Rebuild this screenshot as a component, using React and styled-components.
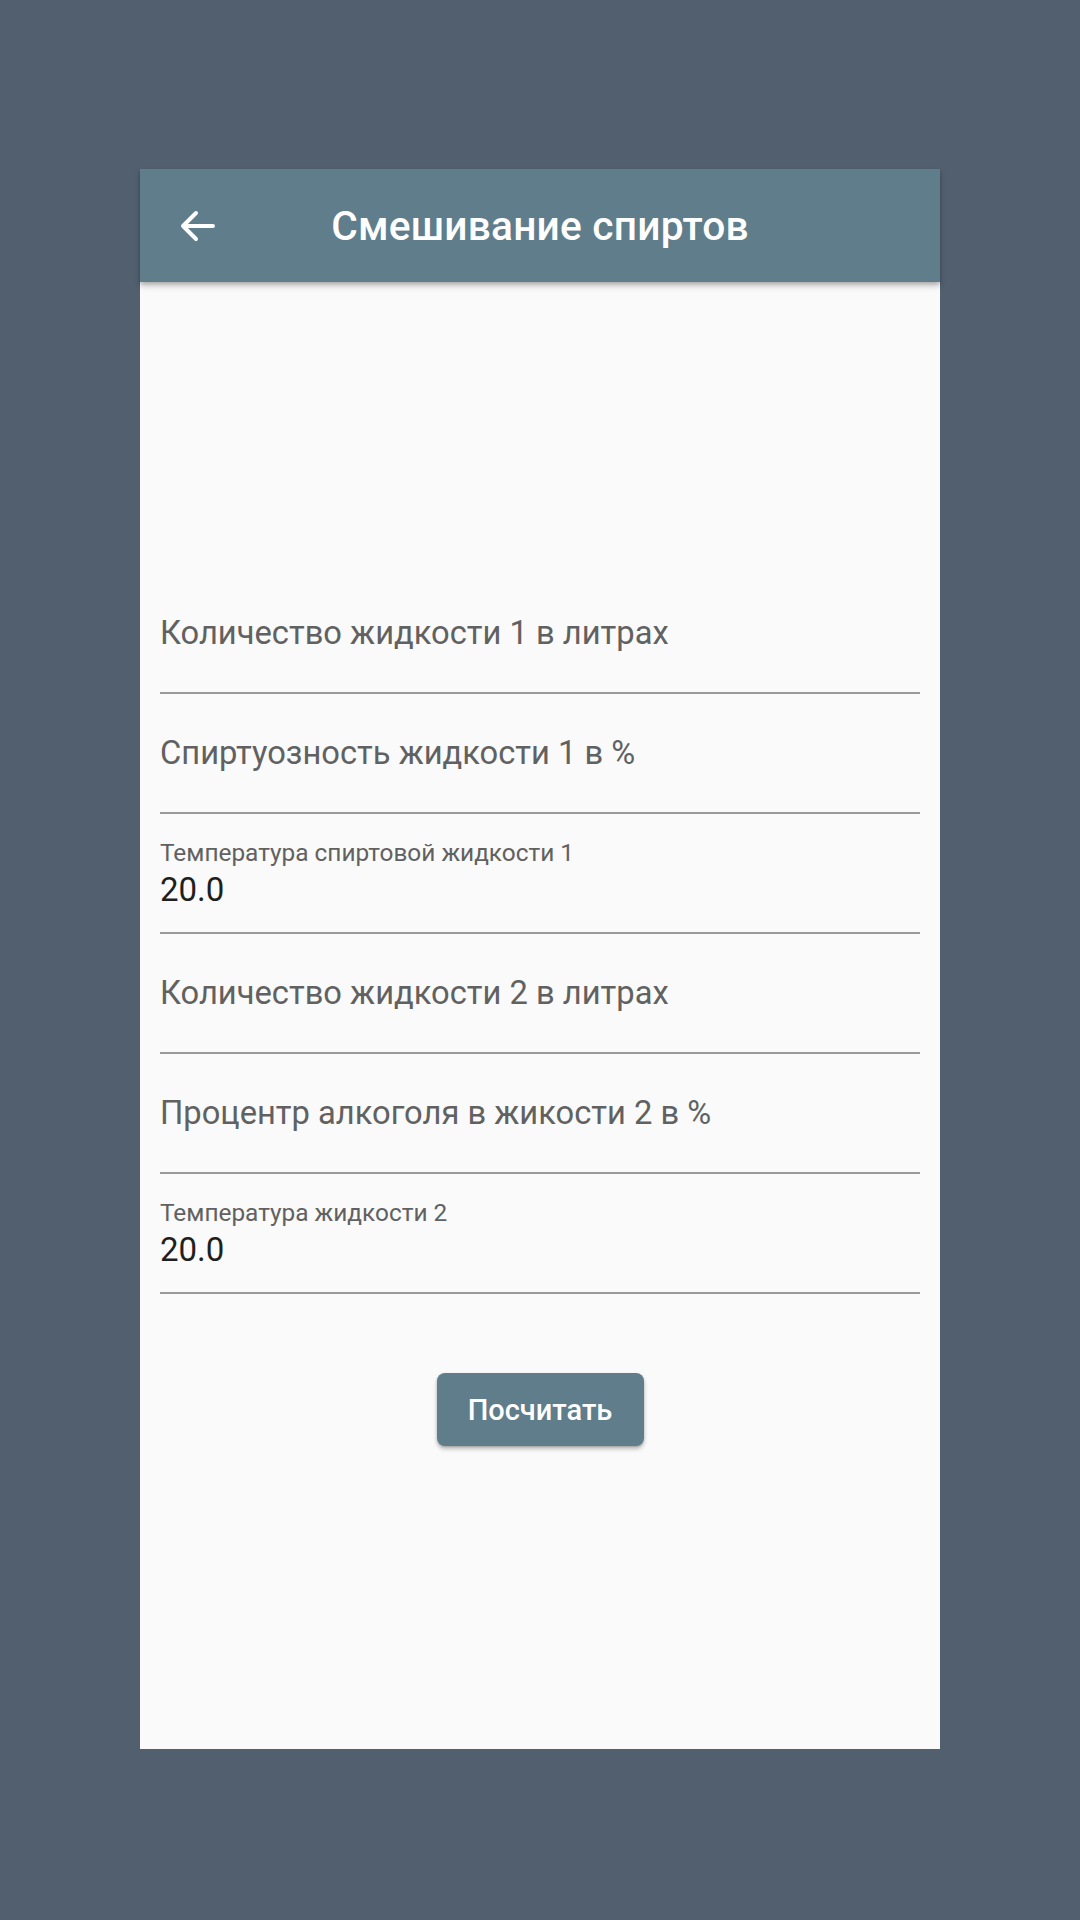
import React from "react";
import styled, { createGlobalStyle } from "styled-components";

const GlobalStyle = createGlobalStyle`
  html, body {
    margin: 0;
    padding: 0;
    background: #525f6f;
    font-family: Roboto, "Noto Sans", sans-serif;
  }
  #root {
    min-height: 1920px;
  }
`;

const Screen = styled.div`
  display: flex;
  justify-content: center;
  padding-top: 169px;
  min-height: 1920px;
  box-sizing: border-box;
`;

const Phone = styled.div`
  width: 800px;
  height: 1580px;
  background: #fafafa;
  display: flex;
  flex-direction: column;
`;

const AppBar = styled.header`
  position: relative;
  z-index: 1;
  height: 113px;
  flex: none;
  background: #607d8b;
  display: flex;
  align-items: center;
  box-shadow: 0 4px 6px rgba(0, 0, 0, 0.22), 0 2px 3px rgba(0, 0, 0, 0.12);
`;

const BackButton = styled.button`
  width: 114px;
  height: 113px;
  flex: none;
  border: 0;
  padding: 0;
  background: transparent;
  display: flex;
  align-items: center;
  justify-content: center;
  cursor: pointer;
`;

const Title = styled.h1`
  flex: 1;
  margin: 0 114px 0 0;
  text-align: center;
  color: #ffffff;
  font-size: 40.7px;
  font-weight: 500;
  letter-spacing: 0.2px;
`;

const Form = styled.main`
  padding: 292px 20px 0;
  display: flex;
  flex-direction: column;
`;

const Field = styled.div`
  height: 120px;
  box-sizing: border-box;
  border-bottom: 2px solid #9a9a9a;
  display: flex;
  flex-direction: column;
  justify-content: flex-end;
  padding-bottom: ${(p) => (p.$filled ? "26px" : "42px")};
`;

const Label = styled.label`
  color: #616161;
  font-size: ${(p) => (p.$floating ? "24.4px" : "32.7px")};
  line-height: 1;
  margin-bottom: ${(p) => (p.$floating ? "8px" : "0")};
`;

const Value = styled.div`
  color: #1f1f1f;
  font-size: 33px;
  line-height: 1;
`;

const Actions = styled.div`
  display: flex;
  justify-content: center;
  padding-top: 79px;
`;

const Button = styled.button`
  width: 207px;
  height: 73px;
  border: 0;
  border-radius: 8px;
  background: #607d8b;
  color: #ffffff;
  font-family: Roboto, "Noto Sans", sans-serif;
  font-size: 29px;
  font-weight: 500;
  box-shadow: 0 3px 4px rgba(0, 0, 0, 0.25), 0 1px 2px rgba(0, 0, 0, 0.15);
  cursor: pointer;
`;

const ArrowBack = () => (
  <svg width="48" height="48" viewBox="0 0 24 24" fill="none">
    <path
      d="M20 12H5M11.5 5.5L5 12l6.5 6.5"
      stroke="#ffffff"
      strokeWidth="2"
      strokeLinecap="round"
      strokeLinejoin="round"
    />
  </svg>
);

const fields = [
  { label: "Количество жидкости 1 в литрах" },
  { label: "Спиртуозность жидкости 1 в %" },
  { label: "Температура спиртовой жидкости 1", value: "20.0" },
  { label: "Количество жидкости 2 в литрах" },
  { label: "Процентр алкоголя в жикости 2 в %" },
  { label: "Температура жидкости 2", value: "20.0" },
];

export default function App() {
  return (
    <>
      <GlobalStyle />
      <Screen>
        <Phone>
          <AppBar>
            <BackButton aria-label="Назад">
              <ArrowBack />
            </BackButton>
            <Title>Смешивание спиртов</Title>
          </AppBar>
          <Form>
            {fields.map((f) => (
              <Field key={f.label} $filled={!!f.value}>
                <Label $floating={!!f.value}>{f.label}</Label>
                {f.value && <Value>{f.value}</Value>}
              </Field>
            ))}
            <Actions>
              <Button>Посчитать</Button>
            </Actions>
          </Form>
        </Phone>
      </Screen>
    </>
  );
}
